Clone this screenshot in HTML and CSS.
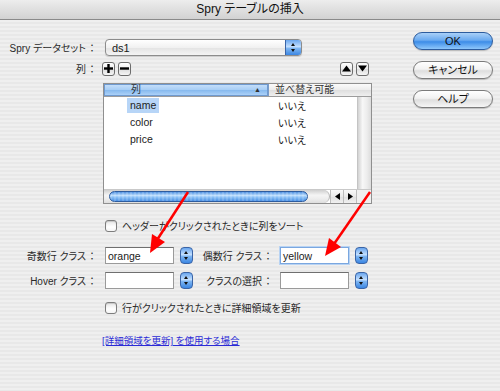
FILE: index.html
```html
<!DOCTYPE html>
<html lang="ja">
<head>
  <meta charset="UTF-8" />
  <title>Spry テーブルの挿入</title>
  <link rel="stylesheet" href="styles.css">
</head>
<body>
  <div class="window">
    <div class="titlebar">Spry テーブルの挿入</div>
    <div class="body">
      <div class="main">
        <div class="row ds-row">
          <span class="label">Spry データセット<span class="colon">：</span></span>
          <div class="popup">
            <span class="popup-text">ds1</span>
            <span class="stepper wide"></span>
          </div>
        </div>

        <div class="row col-row">
          <span class="label">列<span class="colon">：</span></span>
          <span class="sq first">
            <svg width="9" height="9" viewBox="0 0 9 9"><rect x="3.3" y="0" width="2.4" height="9" fill="#000"/><rect x="0" y="3.3" width="9" height="2.4" fill="#000"/></svg>
          </span>
          <span class="sq">
            <svg width="9" height="9" viewBox="0 0 9 9"><rect x="0" y="3.3" width="9" height="2.4" fill="#000"/></svg>
          </span>
          <span class="sq push">
            <svg width="9" height="7" viewBox="0 0 9 7"><polygon points="4.5,0.5 9,6.5 0,6.5" fill="#000"/></svg>
          </span>
          <span class="sq">
            <svg width="9" height="7" viewBox="0 0 9 7"><polygon points="0,0.5 9,0.5 4.5,6.5" fill="#000"/></svg>
          </span>
        </div>

        <div class="table-box">
          <div class="thead">
            <div class="th sorted">列<span class="sort">▲</span></div>
            <div class="th">並べ替え可能</div>
          </div>
          <div class="tmid">
            <div class="tbody">
              <div class="tr"><div class="td c1"><span class="cell selected">name</span></div><div class="td c2">いいえ</div></div>
              <div class="tr"><div class="td c1"><span class="cell">color</span></div><div class="td c2">いいえ</div></div>
              <div class="tr"><div class="td c1"><span class="cell">price</span></div><div class="td c2">いいえ</div></div>
            </div>
            <div class="vscroll"></div>
          </div>
          <div class="tbottom">
            <div class="htrack"><div class="thumb"></div></div>
            <span class="harrow">
              <svg width="5" height="7" viewBox="0 0 5 7"><polygon points="5,0 5,7 0,3.5" fill="#000"/></svg>
            </span>
            <span class="harrow">
              <svg width="5" height="7" viewBox="0 0 5 7"><polygon points="0,0 0,7 5,3.5" fill="#000"/></svg>
            </span>
            <span class="corner"></span>
          </div>
        </div>

        <label class="check-row sort-check">
          <span class="checkbox"></span>
          <span>ヘッダーがクリックされたときに列をソート</span>
        </label>

        <div class="class-row first-class">
          <span class="label">奇数行 クラス<span class="colon">：</span></span>
          <span class="field f1">orange</span>
          <span class="stepper s1"></span>
          <span class="label2">偶数行 クラス<span class="colon">：</span></span>
          <span class="field f2 focused">yellow</span>
          <span class="stepper s2"></span>
        </div>

        <div class="class-row">
          <span class="label">Hover クラス<span class="colon">：</span></span>
          <span class="field f1"></span>
          <span class="stepper s1"></span>
          <span class="label2">クラスの選択<span class="colon">：</span></span>
          <span class="field f2"></span>
          <span class="stepper s2"></span>
        </div>

        <label class="check-row detail-check">
          <span class="checkbox"></span>
          <span>行がクリックされたときに詳細領域を更新</span>
        </label>

        <a class="help-link" href="#">[詳細領域を更新] を使用する場合</a>
      </div>

      <div class="side">
        <span class="btn default">OK</span>
        <span class="btn">キャンセル</span>
        <span class="btn">ヘルプ</span>
      </div>
    </div>

    <!-- 注釈の赤い矢印 -->
    <svg class="arrows" width="500" height="391" viewBox="0 0 500 391">
      <line x1="188" y1="192" x2="157" y2="240" stroke="#ff0000" stroke-width="2.5"/>
      <polygon points="150,253 165,242 152,234" fill="#ff0000"/>
      <line x1="370" y1="192" x2="334" y2="244" stroke="#ff0000" stroke-width="2.5"/>
      <polygon points="325,256 341,247 329,238" fill="#ff0000"/>
    </svg>
  </div>
</body>
</html>
```

FILE: styles.css
```css
* { box-sizing: border-box; }
body {
  margin: 0;
  width: 500px; height: 391px;
  overflow: hidden;
  font-family: "Liberation Sans", "Noto Sans CJK JP", sans-serif;
  font-size: 10px;
  font-feature-settings: "palt";
  color: #1a1a1a;
  background: repeating-linear-gradient(#efefef 0 2px, #e8e8e8 2px 4px);
}
.window {
  position: relative;
  height: 391px;
}
.titlebar {
  height: 20px;
  line-height: 19px;
  text-align: center;
  font-size: 12px;
  color: #111;
  background: linear-gradient(#ededed, #d2d2d2);
  border-bottom: 1px solid #8a8a8a;
}
.body {
  display: flex;
}
.main {
  width: 413px;
  padding-top: 19px;
}
.side {
  width: 80px;
  padding-top: 12px;
  display: flex;
  flex-direction: column;
  gap: 11px;
}
.row {
  display: flex;
  align-items: center;
}
.label {
  width: 97px;
  flex: none;
  text-align: right;
  color: #2a2a2a;
}
.colon {
  font-feature-settings: normal;
  margin-left: 1px;
}

/* ポップアップメニュー */
.ds-row { height: 17px; }
.popup {
  margin-left: 8px;
  width: 197px; height: 17px;
  display: flex;
  align-items: center;
  border: 1px solid #8c8c8c;
  border-radius: 4px;
  background: linear-gradient(#ffffff, #f1f1f1 50%, #e3e3e3 51%, #f4f4f4);
  box-shadow: 0 1px 1px rgba(0,0,0,0.15);
}
.popup-text {
  padding-left: 6px;
  font-size: 11px;
}
.stepper {
  position: relative;
  display: block;
  flex: none;
  width: 13px; height: 17px;
  border: 1px solid #3a64a6;
  border-radius: 4px;
  background: linear-gradient(#6aa6ee, #c4e0ff 45%, #7fb6f2 55%, #3b86e2);
}
.stepper.wide {
  margin-left: auto;
  width: 16px; height: 15px;
  border: none;
  border-left: 1px solid #3a64a6;
  border-radius: 0 3px 3px 0;
}
.stepper::before, .stepper::after {
  content: "";
  position: absolute;
  left: 50%;
  margin-left: -2.5px;
  border-left: 2.5px solid transparent;
  border-right: 2.5px solid transparent;
}
.stepper::before {
  top: 3px;
  border-bottom: 3px solid #111;
}
.stepper::after {
  bottom: 3px;
  border-top: 3px solid #111;
}

/* 列ボタン */
.col-row {
  margin-top: 5px;
  width: 369px;
  height: 15px;
}
.sq {
  width: 13px; height: 14px;
  display: flex;
  align-items: center;
  justify-content: center;
  margin-left: 3px;
  border: 1px solid #6d6d6d;
  border-radius: 3px;
  background: linear-gradient(#ffffff, #ececec 50%, #dcdcdc 51%, #f5f5f5);
}
.sq.first { margin-left: 5px; }
.sq.push { margin-left: auto; }

/* テーブル */
.table-box {
  margin: 7px 0 0 103px;
  width: 269px; height: 121px;
  border: 1px solid #8f8f8f;
  background: #fff;
  display: flex;
  flex-direction: column;
}
.thead {
  height: 13px;
  display: flex;
  border-bottom: 1px solid #9c9c9c;
  background: linear-gradient(#fbfbfb, #ececec 50%, #dedede 51%, #efefef);
}
.th {
  position: relative;
  line-height: 12px;
  color: #333;
}
.th.sorted {
  width: 165px;
  padding-left: 27px;
  border-right: 1px solid #7a9cc8;
  background: linear-gradient(#c9e1fa, #a6cdf5 50%, #86b9ee 51%, #b3d6fa);
  box-shadow: inset 0 0 0 1px #6f9ad0;
}
.th + .th { padding-left: 6px; flex: 1; }
.sort {
  position: absolute;
  right: 7px; top: 0;
  font-size: 7px;
  color: #333;
}
.tmid {
  flex: 1;
  display: flex;
}
.tbody { flex: 1; }
.tr {
  height: 17px;
  display: flex;
  align-items: center;
}
.td.c1 {
  width: 164px;
  padding-left: 23px;
}
.td.c2 { padding-left: 10px; }
.cell {
  display: inline-block;
  padding: 0 3px;
  line-height: 15px;
  font-size: 10.5px;
  color: #222;
}
.cell.selected { background: #b7d5f7; }
.vscroll {
  width: 14px;
  border-left: 1px solid #c4c4c4;
  background: linear-gradient(to right, #d2d2d2, #f7f7f7 35%, #ececec 70%, #dcdcdc);
}
.tbottom {
  height: 14px;
  display: flex;
  border-top: 1px solid #c9c9c9;
}
.htrack {
  width: 226px;
  padding: 1px 0 0 5px;
  border-radius: 0 7px 7px 0;
  border-right: 1px solid #b3b3b3;
  background: linear-gradient(#cfcfcf, #f5f5f5 40%, #ececec 70%, #dedede);
}
.thumb {
  width: 199px; height: 11px;
  border: 1px solid #2d5c9f;
  border-radius: 6px;
  background:
    repeating-linear-gradient(90deg, rgba(255,255,255,0.15) 0 2px, rgba(255,255,255,0) 2px 4px),
    linear-gradient(#4d8fe0, #bfe0ff 40%, #8ec3f7 55%, #4a90e4);
}
.harrow {
  width: 13px;
  display: flex;
  align-items: center;
  justify-content: center;
  border-left: 1px solid #bcbcbc;
  background: linear-gradient(#f9f9f9, #e9e9e9 50%, #dedede 51%, #f1f1f1);
}
.corner {
  flex: 1;
  border-left: 1px solid #bcbcbc;
  background: #f0f0f0;
}

/* チェックボックス */
.check-row {
  display: flex;
  align-items: center;
  gap: 5px;
  margin-left: 105px;
  height: 13px;
  color: #2a2a2a;
}
.sort-check { margin-top: 15px; }
.detail-check { margin-top: 12px; }
.checkbox {
  width: 12px; height: 12px;
  border: 1px solid #7d7d7d;
  border-radius: 3px;
  background: linear-gradient(#e6e6e6, #ffffff 60%, #f4f4f4);
  box-shadow: inset 0 1px 1px rgba(0,0,0,0.15);
}

/* クラス入力 */
.class-row {
  display: flex;
  align-items: center;
  height: 17px;
  margin-top: 8px;
}
.class-row.first-class { margin-top: 15px; }
.field {
  height: 17px;
  padding: 1px 2px 0;
  line-height: 14px;
  font-size: 10.5px;
  background: #fff;
  border: 1px solid #9a9a9a;
  border-top-color: #6f6f6f;
}
.field.f1 { margin-left: 8px; width: 69px; }
.field.f2 { margin-left: 7px; width: 69px; }
.field.focused {
  border: 1px solid #7aa7e0;
  box-shadow: 0 0 0 1px #b8d3f3;
}
.stepper.s1 { margin-left: 6px; }
.stepper.s2 { margin-left: 6px; }
.label2 {
  width: 80px;
  text-align: right;
  color: #2a2a2a;
}

.help-link {
  display: inline-block;
  margin: 19px 0 0 102px;
  font-size: 9.5px;
  color: #2b2bd6;
  text-decoration: underline;
}

/* 右側のボタン */
.btn {
  height: 18px;
  line-height: 16px;
  text-align: center;
  font-size: 11px;
  color: #111;
  border: 1px solid #7b7b7b;
  border-radius: 9px;
  background: linear-gradient(#ffffff, #f2f2f2 45%, #dedede 55%, #f6f6f6);
  box-shadow: 0 1px 1px rgba(0,0,0,0.2);
}
.btn.default {
  border-color: #2c5c9e;
  background: linear-gradient(#a9d0f8, #6aaaf0 45%, #3d8de8 55%, #8ec7fb);
}

.arrows {
  position: absolute;
  left: 0; top: 0;
  pointer-events: none;
}
```
